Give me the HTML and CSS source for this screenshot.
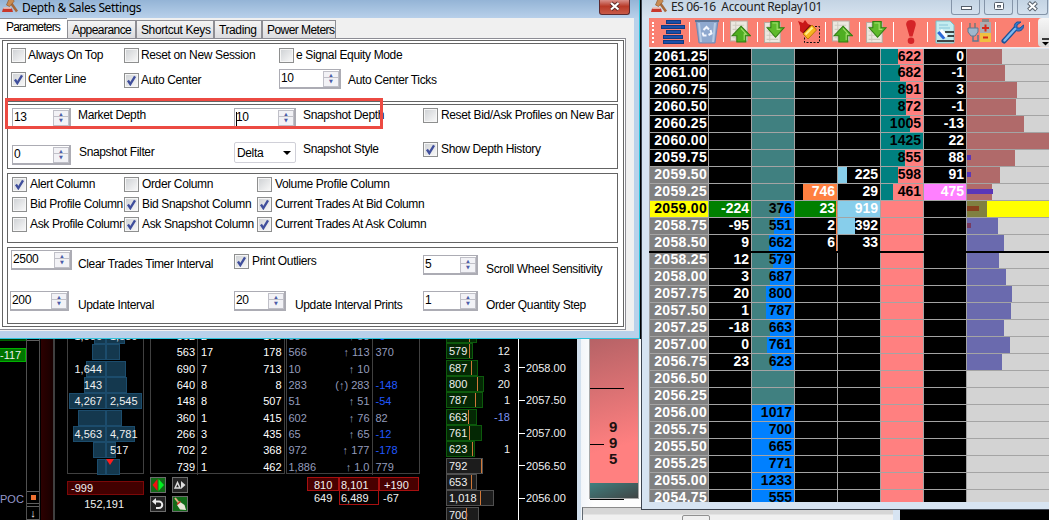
FILE: index.html
```html
<!DOCTYPE html>
<html lang="en">
<head>
  <meta charset="UTF-8" />
  <meta name="viewport" content="width=device-width, initial-scale=1.0"/>
  <title>Depth &amp; Sales</title>
  <link rel="stylesheet" href="styles.css">
</head>
<body>
  <svg class="defs" width="0" height="0">
    <defs>
      <symbol id="gavel" viewBox="0 0 16 16">
        <path d="M9 4L15 12.500" stroke="#a5683a" stroke-width="2.600"/>
        <path d="M4.500 6L7 0H11.500L12 2.500L7.500 7.500Z" fill="#c98b52" stroke="#84502a" stroke-width=".6"/>
        <path d="M1 9.500h9l1 3.500H0z" fill="#c8382c"/>
        <path d="M1.500 9h7.500" stroke="#f4b8a8" stroke-width="1.500"/>
      </symbol>
      <symbol id="pageUp" viewBox="1.5 1.5 20 22">
        <path d="M2 2h16v19H2z" fill="#ebe8e0" stroke="#b9aaa0"/>
        <path d="M4 6h11M4 10h11M4 14h11M4 18h11M7 3v17" stroke="#cfcac0"/>
        <path d="M12 7L21 16H16.500V22H8V16H3.500Z" fill="#4fae22" stroke="#2f7d10"/>
        <path d="M12 9L17 14.500H15V20" fill="none" stroke="#a4e070"/>
      </symbol>
      <symbol id="pageDown" viewBox="1.5 1 20 22">
        <path d="M2 3h15v19H2z" fill="#ebe8e0" stroke="#b9aaa0"/>
        <path d="M4 7h11M4 11h11M4 15h11M4 19h11M7 4v17" stroke="#cfcac0"/>
        <path d="M8 2H16V8H20.500L12.500 17L4.500 8H8Z" fill="#5fba2c" stroke="#2f7d10"/>
        <path d="M9.500 3.500H14V9.500H17" fill="none" stroke="#a4e070"/>
      </symbol>
    </defs>
  </svg>

  <div class="desktop">
    <!-- footprint chart -->
    <section class="chart">
      <div class="quotes">
        <div class="quote dim"></div>
        <div class="quote">-117</div>
        <div class="poc">POC</div>
      </div>
      <div class="scroller">
        <div class="thumb top"></div>
        <div class="thumb mid"><i></i></div>
        <div class="thumb end">↓</div>
      </div>
      <div class="band"></div>

      <div class="profile">
        <div class="profile-rows" id="profile"></div>
        <div class="delta">-999</div>
        <div class="volume">152,191</div>
      </div>

      <div class="prints">
        <div class="tables">
          <div class="table trades" id="trades"></div>
          <div class="table flow" id="flow"></div>
        </div>
        <div class="bottom">
          <div class="tools">
            <div class="tool green"><svg viewBox="0 0 14 14"><path d="M6.500 1V13L1.500 7Z" fill="#f01010"/><path d="M7.500 1V13L13 7Z" fill="#00f020"/></svg></div>
            <div class="tool"><svg viewBox="0 0 14 14"><path d="M2 10L4.500 4.500L7 10Z" fill="none" stroke="#ddd" stroke-width="1.500"/><path d="M8 3L12.500 7L8 11Z" fill="#ddd"/></svg></div>
            <div class="tool"><svg viewBox="0 0 14 14"><path d="M3 4.500H8A3 3 0 0 1 8 11H5" fill="none" stroke="#eee" stroke-width="2"/><path d="M1 4.500L5 1V8Z" fill="#eee"/></svg></div>
            <div class="tool green"><svg viewBox="0 0 14 14"><path d="M2 1L6 6" stroke="#e0b080" stroke-width="2"/><path d="M6.500 4.500L11.500 8L13 13L7 12.500L4 8Z" fill="#e8e8d8"/><path d="M4 7.500L7.500 4.500" stroke="#d03020" stroke-width="1.500"/></svg></div>
          </div>
          <div class="totals">
            <span>810</span><span>8,101</span><span>+190</span>
            <span>649</span><span>6,489</span><span>-67</span>
          </div>
        </div>
      </div>

      <div class="levels" id="levels"></div>
      <div class="axis" id="axis"></div>
    </section>

    <!-- pressure gauge -->
    <section class="gauge">
      <div class="gauge-body">
        <div class="gauge-top">
          <i class="mark long"></i>
          <i class="mark"></i>
          <div class="gauge-value">9<br>9<br>5</div>
        </div>
        <div class="gauge-low"></div>
        <i class="gauge-foot"></i>
      </div>
    </section>
    <div class="under">
      <div class="under-tab"></div>
    </div>

    <!-- ladder -->
    <section class="ladder">
      <div class="ladder-title">
        <svg class="app-icon" width="16" height="16"><use href="#gavel"/></svg>
        <span>ES 06-16&nbsp; Account Replay101</span>
        <div class="caption">
          <b><svg width="28" height="14"><rect x="9.500" y="6.500" width="10" height="3" fill="#fff" stroke="#555e6a"/></svg></b>
          <b><svg width="28" height="14"><rect x="9.500" y="2.500" width="9" height="7" rx="1" fill="#fff" stroke="#555e6a"/><rect x="12.500" y="5.500" width="3" height="1.500" fill="#fff" stroke="#555e6a"/></svg></b>
          <b><svg width="30" height="14"><path d="M10.500 2.500L18.500 10M18.500 2.500L10.500 10" stroke="#555e6a" stroke-width="4"/><path d="M11 3L18 9.500M18 3L11 9.500" stroke="#fff" stroke-width="2"/></svg></b>
        </div>
      </div>
      <div class="toolbar">
        <div class="grip"></div>
        <div class="item"><svg width="26" height="26" viewBox="0 0 26 26"><g fill="#1c4fa8" stroke="#123a80"><rect x="6.500" y="1.500" width="14" height="3"/><rect x="1.500" y="6.500" width="23" height="3"/><rect x="6.500" y="11.500" width="14" height="3"/><rect x="3.500" y="16.500" width="19" height="3"/><rect x="3.500" y="21.500" width="20" height="3"/></g></svg></div>
        <div class="item"><svg width="24" height="26" viewBox="0 0 24 26"><path d="M1 2h22l-3 22H4z" fill="#8fa9cf" stroke="#7088b4"/><path d="M0 2h24" stroke="#5f7596" stroke-width="2"/><path d="M4 4l2 19M20 4l-2 19" stroke="#b7cbe4" stroke-width="2"/><path d="M8.500 11l3-3 2.500 2.500M15.500 11l1 3.500-3 1.500M11.500 16.500H8.500l-1-3" fill="none" stroke="#f4f8ff" stroke-width="2"/></svg></div>
        <div class="item"><svg width="21" height="24"><use href="#pageUp"/></svg></div>
        <div class="item"><svg width="21" height="24"><use href="#pageDown"/></svg></div>
        <div class="item"><svg width="26" height="26" viewBox="0 0 26 26"><rect x="8.500" y="7.500" width="15" height="16" fill="none" stroke="#111" stroke-dasharray="2 1.500"/><path d="M2 2l5 2 2-3 3 4 5 2-8 9-5-4 0-5z" fill="#c81818"/><path d="M7 15L16 6L20.500 11L12 20Z" fill="#f6b420" stroke="#c07808"/><path d="M9.500 15.500L16.500 8.500" stroke="#fff08a" stroke-width="2"/><path d="M7.500 13.500L14.500 6" stroke="#5c1010"/></svg></div>
        <div class="item"><svg width="21" height="24"><use href="#pageUp"/></svg></div>
        <div class="item"><svg width="21" height="24"><use href="#pageDown"/></svg></div>
        <div class="item"><svg width="12" height="26" viewBox="0 0 12 26"><path d="M6 1C10 1 11.500 4 10.500 7L7.500 17.500H4.500L1.500 7C.5 4 2 1 6 1Z" fill="#d42428"/><circle cx="6" cy="21.800" r="3.300" fill="#d42428"/></svg></div>
        <div class="item"><svg width="22" height="26" viewBox="0 0 22 26"><path d="M2 2h14l4 4v18H2z" fill="#c4ecf0" stroke="#7cc0c8"/><path d="M5 6h9M5 9h11" stroke="#86c4d8"/><path d="M11 13h9M11 17h9M3 22h17" stroke="#111" stroke-width="1.600"/><path d="M3 14L8 10L14 17L9 20.500Z" fill="#fff"/><path d="M3 14L5.500 12L11.500 19L9 20.500Z" fill="#2a6ad8"/></svg></div>
        <div class="item"><svg width="26" height="26" viewBox="0 0 26 26"><path d="M4 4v5M9 4v5" stroke="#777" stroke-width="1.500"/><path d="M2 9h10v4l-3 4H5l-3-4z" fill="#9fb6cc" stroke="#60788e"/><path d="M7 17v5h5v-6" fill="none" stroke="#60788e" stroke-width="1.500"/><rect x="14" y="3" width="11" height="11" fill="#a9adb0"/><rect x="14" y="14" width="11" height="9" fill="#f0c040"/><path d="M16 1.500h7" stroke="#888" stroke-width="3"/><path d="M16 9h7M19.500 5.500v7M17 18.500h5" stroke="#d82818" stroke-width="2"/></svg></div>
        <div class="item"><svg width="24" height="26" viewBox="0 0 24 26"><path d="M3 22L14 10" stroke="#1c5298" stroke-width="5" stroke-linecap="round"/><path d="M20 3L16 6V9H19L22.500 6C23 10 20 12.500 16.500 12C12.500 11 12 5 16 3Z" fill="#2f78cc" stroke="#1c5298"/><path d="M3.500 21.500L14 10" stroke="#7cb8f0" stroke-width="2.500" stroke-linecap="round"/></svg></div>
        <div class="overflow"><svg width="7" height="8"><path d="M0 1h7" stroke="#000" stroke-width="1.500"/><path d="M0 4h7L3.500 7.500Z"/></svg></div>
      </div>
      <div class="ladder-rows" id="ladder"></div>
    </section>

    <!-- settings dialog -->
    <section class="dialog">
      <div class="dialog-title">
        <svg class="app-icon" width="16" height="16"><use href="#gavel"/></svg>
        <span>Depth &amp; Sales Settings</span>
        <b class="close"><svg width="30" height="13"><path d="M11 3L18.500 9.500M18.500 3L11 9.500" stroke="#5c2a28" stroke-width="4"/><path d="M11 3L18.500 9.500M18.500 3L11 9.500" stroke="#fff" stroke-width="2.200"/></svg></b>
      </div>
      <div class="dialog-body">
        <nav class="tabs">
          <div class="tab active">Parameters</div>
          <div class="tab">Appearance</div>
          <div class="tab">Shortcut Keys</div>
          <div class="tab">Trading</div>
          <div class="tab">Power Meters</div>
        </nav>
        <div class="page">
          <div class="frame">
            <div class="group general">
              <label class="check">Always On Top</label>
              <label class="check">Reset on New Session</label>
              <label class="check wide">e Signal Equity Mode</label>
              <label class="check on">Center Line</label>
              <label class="check on low">Auto Center</label>
              <div class="spin w62">10</div>
              <span class="low">Auto Center Ticks</span>
            </div>

            <div class="group depth">
              <div class="spin">13</div>
              <span class="text">Market Depth</span>
              <div class="spin w62 caret">10</div>
              <span class="text">Snapshot Depth</span>
              <label class="check">Reset Bid/Ask Profiles on New Bar</label>
              <div class="spin second">0</div>
              <span class="text filter">Snapshot Filter</span>
              <div class="select">Delta</div>
              <span class="text">Snapshot Style</span>
              <label class="check on">Show Depth History</label>
            </div>

            <div class="group columns">
              <label class="check on">Alert Column</label>
              <label class="check">Order Column</label>
              <label class="check">Volume Profile Column</label>
              <label class="check">Bid Profile Column</label>
              <label class="check on">Bid Snapshot Column</label>
              <label class="check on">Current Trades At Bid Column</label>
              <label class="check">Ask Profile Column</label>
              <label class="check on">Ask Snapshot Column</label>
              <label class="check on">Current Trades At Ask Column</label>
            </div>

            <div class="group timing">
              <div class="spin w61">2500</div>
              <span class="text">Clear Trades Timer Interval</span>
              <label class="check on">Print Outliers</label>
              <div class="spin w55 sens">5</div>
              <span class="text sens-text">Scroll Wheel Sensitivity</span>
              <div class="spin">200</div>
              <span class="text">Update Interval</span>
              <div class="pair">
                <div class="spin w52">20</div>
                <span class="text">Update Interval Prints</span>
              </div>
              <div class="spin w55">1</div>
              <span class="text">Order Quantity Step</span>
            </div>
          </div>
        </div>
      </div>
      <div class="highlight"></div>
    </section>
  </div>

  <script src="script.js"></script>
</body>
</html>
```

FILE: styles.css
```css
:root {
  --grid: #a4a4a4;
  --teal: #408080;
  --blue: #0080ff;
  --pink: #ff8080;
  --salmon: #fa8072;
  --frame: #b9d1ea;
  --font: "Liberation Sans", Arial, sans-serif;
}

* {
  box-sizing: border-box;
}

body {
  margin: 0;
  background: #000;
  font-family: var(--font);
  overflow: hidden;
}

.defs {
  position: absolute;
}

.desktop {
  position: relative;
  width: 1049px;
  height: 520px;
  overflow: hidden;
  background: #000;
}

/* ---------- settings dialog ---------- */

.dialog {
  position: absolute;
  left: 0;
  top: 0;
  width: 641px;
  height: 339px;
  padding: 0 6px 6px 0;
  background: var(--frame);
  border-right: 1px solid #000;
  box-shadow: inset -1px -1px 0 #2cc4dc;
  font-size: 12px;
  letter-spacing: -0.36px;
  color: #000;
}

.dialog-title {
  display: flex;
  align-items: center;
  height: 18px;
  margin-right: -5px;
  padding: 0 0 3px 2px;
  background: linear-gradient(to bottom, #94b4d6, #b8d0ea);
}

.dialog-title span {
  flex: 1;
  margin-left: 4px;
  font: 12px "Noto Sans", sans-serif;
  letter-spacing: -0.38px;
  line-height: 14px;
}

.close {
  width: 31px;
  height: 15px;
  margin-right: 9px;
  border: 1px solid #5c2a30;
  border-top: 0;
  border-radius: 0 0 3px 3px;
  background: linear-gradient(to bottom, #d8908a, #b83a28 45%, #c85a48);
}

.close svg {
  display: block;
}

.dialog-body {
  height: 313px;
  background: #f0f0f0;
}

.tabs {
  display: flex;
  align-items: flex-end;
  height: 20px;
}

.tab {
  height: 18px;
  padding: 2px 0 0 4px;
  line-height: 15px;
  border: 1px solid #8e8e94;
  border-bottom: 0;
  background: linear-gradient(to bottom, #f4f4f4, #dcdcdf);
  letter-spacing: -0.4px;
  white-space: nowrap;
}

.tab:nth-child(2) { width: 69px; letter-spacing: -0.8px; }
.tab:nth-child(2) { letter-spacing: -0.55px; }
.tab:nth-child(3) { width: 78px; }
.tab:nth-child(4) { width: 48px; }
.tab:nth-child(5) { width: 74px; letter-spacing: -0.55px; }

.tab.active {
  width: 67px;
  height: 20px;
  padding: 1px 0 0 6px;
  border-left: 0;
  border-right: 0;
  background: #fff;
  letter-spacing: -0.8px;
}

.page {
  width: 626px;
  height: 292px;
  padding: 1px 0 0 2px;
  border: 1px solid #8c8c94;
  border-left: 0;
  background: #fff;
}

.frame {
  display: flex;
  flex-direction: column;
  width: 622px;
  height: 287px;
  padding: 2px 4px;
  border: 1px solid #646464;
}

.group {
  display: grid;
  align-items: start;
  justify-content: start;
  width: 611px;
  border: 1px solid #646464;
  white-space: nowrap;
}

.general {
  grid-template-columns: 113px 155px 69px auto;
  grid-template-rows: 24px 24px;
  height: 59px;
  padding: 4px 0 0 3px;
}

.general .wide { grid-column: span 2; }
.general .low { padding-top: 1px; }
.general .spin { margin-top: -3px; }

.depth {
  grid-template-columns: 66px 156px 69px 120px auto;
  grid-template-rows: 34px 24px;
  height: 65px;
  margin-top: 2px;
  padding: 3px 0 0 4px;
}

.depth .second { margin-top: 3px; }
.depth .filter { padding: 3px 0 0 1px; }

.columns {
  grid-template-columns: 112px 133px auto;
  grid-auto-rows: 20px;
  height: 70px;
  margin-top: 4px;
  padding: 3px 0 0 4px;
}

.timing {
  grid-template-columns: 68px 156px 189px 63px auto;
  grid-template-rows: 41px 24px;
  height: 77px;
  margin-top: 4px;
  padding: 2px 0 0 2px;
}

.timing .w61 { margin-left: 1px; }
.timing .check { margin-top: 4px; }
.timing .text { margin-top: 7px; }
.timing .sens { margin-top: 5px; }
.timing .sens-text { margin-top: 12px; }

.pair {
  display: flex;
  gap: 9px;
}

.text,
.general span {
  line-height: 14px;
}

.check {
  display: flex;
  gap: 3px;
  line-height: 14px;
}

.check::before {
  content: "";
  flex: none;
  width: 13px;
  height: 13px;
  border: 1px solid #8e8f8f;
  background: linear-gradient(135deg, #cdd0d3, #fafafa);
  box-shadow: inset 0 0 0 1px #f6f6f6;
}

.general .check {
  gap: 2px;
}

.depth .check,
.timing .check {
  gap: 3px;
}

.check.on::before {
  background: url("data:image/svg+xml,%3Csvg xmlns='http://www.w3.org/2000/svg' viewBox='0 0 11 11'%3E%3Cpath d='M2.500 5.500L4.500 8.500L8.500 2' fill='none' stroke='%23404f9c' stroke-width='2'/%3E%3C/svg%3E"), linear-gradient(135deg, #cdd0d3, #fafafa);
}

.spin {
  position: relative;
  width: 59px;
  height: 20px;
  padding: 0 0 0 1px;
  border: 2px solid #acacb4;
  border-width: 1px 2px 2px 1px;
  line-height: 17px;
}

.w62 { width: 62px; }
.w61 { width: 61px; }
.w55 { width: 55px; }
.w52 { width: 52px; }

/* arrow buttons */
.spin::before,
.spin::after {
  position: absolute;
  right: 0;
  width: 14px;
  height: 8px;
  border: 1px solid #c0c0c8;
  background: #f2f2f6;
  font: 5px/6px "DejaVu Sans", sans-serif;
  letter-spacing: 0;
  text-align: center;
  color: #4c5ca8;
}

.spin::before {
  content: "▲";
  top: 1px;
}

.spin::after {
  content: "▼";
  bottom: 0;
}

.caret {
  padding-left: 1px;
  background: linear-gradient(#000, #000) 1px 3px / 1px 14px no-repeat;
}

.select {
  display: flex;
  align-items: center;
  justify-content: space-between;
  width: 62px;
  height: 21px;
  padding: 0 4px 0 2px;
  border: 1px solid #d0d0d8;
  border-radius: 2px;
}

.select::after {
  content: "";
  border: 4px solid transparent;
  border-top-color: #000;
  border-bottom: 0;
}

.highlight {
  position: absolute;
  left: 5px;
  top: 98px;
  width: 378px;
  height: 31px;
  border: 3px solid #ec4a42;
}

/* ---------- ladder ---------- */

.ladder {
  position: absolute;
  left: 641px;
  top: 0;
  width: 408px;
  height: 510px;
  padding: 0 0 7px 7px;
  border-left: 1px solid #3c4450;
  border-bottom: 1px solid #3c4450;
  background: #d7e4f2;
}

.ladder-title {
  display: flex;
  height: 18px;
  margin-left: -7px;
  padding-left: 8px;
  background: linear-gradient(to bottom, #c4d4e4, #d8e4f0);
}

.ladder-title .app-icon {
  margin: -1px 4px 0 1px;
}

.dialog-title .app-icon {
  margin-top: -1px;
}

.ladder-title span {
  flex: 1;
  font: 12px/14px "Noto Sans", sans-serif;
  letter-spacing: -0.36px;
  color: #222;
}

.caption {
  display: flex;
  gap: 4px;
}

.caption b {
  width: 29px;
  height: 15px;
  border: 1px solid #8494a8;
  border-top: 0;
  border-radius: 0 0 3px 3px;
}

.caption b:last-child {
  width: 31px;
  margin-right: 1px;
}

.toolbar {
  display: flex;
  height: 30px;
  background: var(--salmon);
  border-bottom: 1px solid #f8e8e4;
}

.grip {
  width: 2px;
  height: 21px;
  margin: 4px 2px 0 3px;
  border-left: 2px dotted #fff;
}

.item {
  display: flex;
  align-items: center;
  justify-content: center;
  width: 34px;
  padding-bottom: 1px;
}

.item::after {
  content: "";
  width: 1px;
  height: 20px;
  background: #fff;
}

.item svg {
  margin: 0 auto;
}

.overflow {
  flex: 1;
  margin-left: 8px;
  padding: 20px 0 0 4px;
  border-radius: 4px 0 0 4px;
  background: linear-gradient(to bottom, #f6f6f6, #d8d8d8);
}

.overflow svg {
  display: block;
}

.ladder-rows {
  display: flex;
  flex-direction: column;
  height: 454px;
  padding-top: 1px;
  overflow: hidden;
  font: bold 14px/15px var(--font);
}

.row {
  display: grid;
  flex: none;
  grid-template-columns: 60px repeat(6, 43px) 83px;
  height: 17px;
  border-bottom: 1px solid var(--grid);
}

.row:first-child {
  height: 16px;
  line-height: 14px;
}

/* centre line */
.row.center {
  height: 18px;
  margin-bottom: -1px;
  border-bottom: 2px solid #000;
  z-index: 1;
}

.cell {
  position: relative;
  padding-right: 2px;
  border-right: 1px solid var(--grid);
  background: #000;
  color: #fff;
  text-align: right;
  overflow: hidden;
}

.cell span {
  position: relative;
}

.cell .fill {
  position: absolute;
  top: 0;
  bottom: 0;
  left: 0;
}

.fill.right { left: auto; right: 0; }

.price { letter-spacing: 0.3px; padding-right: 1px; border-left: 1px solid var(--grid); }
.price.in { background: #808080; }
.price.last { background: #ff0; color: #000; }

.bid { background: var(--teal); color: #000; }
.bid .fill { background: var(--blue); }
.ask { background: var(--pink); color: #000; }
.ask .fill { background: #008080; }
.hit .fill { background: #ff8040; }
.lift .fill { background: #87ceeb; }
.cell.green { background: #008000; }
.cell.magenta { background: #ff80ff; }

.hist { background: #d3d3d3; border-right: 0; padding: 0; }
.hist .fill { background: #b06a6a; }
.hist.below .fill { background: #6a6aae; }
.hist.last { background: #ff0; }
.hist.last .fill { background: #808040; }

.hist .tick {
  position: absolute;
  left: 0;
  top: 5px;
  height: 5px;
  background: #5a36b8;
}

.hist.last .tick { background: #88401e; }
.hist.below .tick { background: #783a60; }

/* ---------- gauge ---------- */

.gauge {
  position: absolute;
  left: 577px;
  top: 330px;
  width: 66px;
  height: 190px;
  padding: 0 3px 0 12px;
  border-left: 4px solid #d2e0ee;
  background: linear-gradient(to right, #f2f5f9, #fdfdfd 12px);
}

.gauge-body {
  width: 50px;
  height: 169px;
  margin-left: -4px;
  border: solid #a8a8a8;
  border-width: 0 1px 1px;
}

.gauge-top {
  display: grid;
  grid-template-rows: 59px 56px 38px;
  height: 153px;
  background: linear-gradient(165deg, #b06064, #ff8080 75%);
}

.mark {
  width: 14px;
  border-bottom: 1px solid #000;
}

.mark.long {
  width: 34px;
}

.gauge-value {
  margin: -26px 0 0 19px;
  font-weight: bold;
  font-size: 15px;
  line-height: 16px;
  color: #201010;
}

.gauge-low {
  height: 15px;
  background: linear-gradient(160deg, #408080, #404444);
}

.gauge-foot {
  display: block;
  width: 34px;
  margin-top: 1px;
  border-bottom: 1px solid #000;
}

.under {
  position: absolute;
  left: 582px;
  top: 507px;
  width: 318px;
  height: 13px;
  border-left: 1px solid #606870;
  border-top: 1px solid #8a8a8a;
  border-right: 7px solid #d7e4f2;
  background: linear-gradient(to bottom, #d6d6d6 6px, #f0f0f0 7px);
  padding: 7px 0 0 99px;
}

.under-tab {
  width: 28px;
  height: 8px;
  border: 1px solid #909090;
  border-radius: 2px;
}

/* ---------- footprint chart ---------- */

.chart {
  position: absolute;
  left: 0;
  top: 327px;
  display: flex;
  width: 577px;
  height: 193px;
  background: #000;
  color: #f0f0f0;
  font-size: 11px;
  line-height: 16.330px;
}

.quotes {
  width: 26px;
}

.quote {
  width: 26px;
  height: 14px;
  margin-top: 7px;
  padding-right: 4px;
  border: 1px solid #00b000;
  border-left: 0;
  background: #007400;
  line-height: 13px;
  text-align: right;
}

.quote.dim {
  margin-top: 0;
  border-color: #006000;
  background: #004000;
}

.poc {
  height: 16px;
  margin-top: 129px;
  color: #9498cc;
}

.scroller {
  display: flex;
  flex-direction: column;
  width: 14px;
  border: solid #505050;
  border-width: 0 1px;
}

.thumb {
  display: flex;
  align-items: center;
  justify-content: center;
  height: 14px;
  border: 1px solid #606060;
  border-width: 1px 0;
}

.thumb.mid { margin-top: 150px; }
.thumb.end { margin-top: 2px; }

.thumb i {
  width: 5px;
  height: 5px;
  background: #f07030;
}

.band {
  width: 14px;
  margin-left: 1px;
  border-right: 2px solid #404040;
  background: linear-gradient(to right, #2c0000, #180000);
}

.profile {
  width: 77px;
  margin-left: 12px;
}

.profile-rows {
  height: 147px;
  border: 1px solid #404040;
}

.profile-rows .bar-row {
  display: grid;
  grid-template-columns: 38px 38px;
  height: 16.330px;
}

.bar-row span {
  position: relative;
  padding: 0 4px;
}

.bar-row span:first-child {
  text-align: right;
}

.bar-row i {
  position: absolute;
  top: 0;
  left: 0;
  height: 16px;
  border: 1px solid #1c4c6c;
  background: #14384e;
}

.bar-row span:first-child i {
  left: auto;
  right: 0;
}

.bar-row em {
  position: relative;
  font-style: normal;
}

.bar-row.down span:last-child::after {
  content: "";
  position: absolute;
  z-index: 1;
  left: 0;
  bottom: -6px;
  border: 4px solid transparent;
  border-top: 6px solid #ff1c1c;
  border-bottom: 0;
}

.delta {
  height: 14px;
  margin-top: 7px;
  padding-left: 3px;
  border: 1px solid #7c0808;
  background: #420000;
  line-height: 13px;
}

.volume {
  margin-top: 1px;
  padding-right: 20px;
  text-align: right;
}

.prints {
  width: 270px;
  margin-left: 6px;
}

.tables {
  display: flex;
  gap: 1px;
  height: 147px;
}

.table {
  width: 135px;
  border: 1px solid #404040;
}

.table div {
  display: grid;
  height: 16.330px;
}

.trades { color: #fff; }
.trades div { grid-template-columns: 47px 1fr auto; padding-right: 2px; }
.trades span:first-child { text-align: right; padding-right: 2px; border-right: 1px solid #404040; }
.trades span:nth-child(2) { padding-left: 3px; }

.flow { color: #949cbc; }
.flow div { grid-template-columns: 32px 54px 1fr; }
.flow span:first-child { padding-left: 2px; white-space: nowrap; }
.flow span:nth-child(2) { text-align: right; padding-right: 2px; border-right: 1px solid #404040; }
.flow span:nth-child(3) { padding-left: 3px; }
.flow .neg { color: #2058ff; }

.bottom {
  display: flex;
  justify-content: space-between;
  padding: 3px 1px 0 0;
}

.tools {
  display: grid;
  grid-template-columns: 16px 16px;
  grid-auto-rows: 16px;
  gap: 3px 6px;
}

.tool {
  border: 1px solid #6c6c6c;
  background: #242424;
}

.tool.green { background: #126a18; }

.tool svg {
  display: block;
  width: 14px;
  height: 14px;
}

.totals {
  display: grid;
  grid-template-columns: 32px 40px 40px;
  grid-template-rows: 14px 14px;
  line-height: 15px;
  text-align: left;
}

.totals span {
  padding-left: 7px;
}

.totals span:nth-child(3n+2) {
  padding-left: 1px;
  border: 1px solid #a81010;
  border-top: 0;
}

.totals span:nth-child(3n) { padding-left: 4px; }

.totals span:nth-child(-n+3) {
  border: 1px solid #a81010;
  background: #480000;
  line-height: 14px;
}

.totals span:first-child { padding-left: 6px; }

.levels {
  width: 72px;
  margin-left: 26px;
}

.level {
  display: flex;
  justify-content: space-between;
  height: 16.330px;
  padding-right: 8px;
}

.level b {
  position: relative;
  height: 16px;
  padding-left: 2px;
  border: 1px solid #0c5a0c;
  background: #042804;
  font-weight: normal;
  line-height: 15px;
  white-space: nowrap;
}

.level.out b {
  border-color: #505050;
  background: #1c1c1c;
}

.level i {
  position: absolute;
  top: 0;
  bottom: 0;
  width: 1px;
  background: #d07838;
}

.level .neg { color: #7c94f0; }

.axis {
  border-left: 1px solid #fff;
}

.axis div {
  display: flex;
  align-items: center;
  gap: 1px;
  height: 32.660px;
}

.axis div:first-child {
  height: 24.500px;
  padding-bottom: 8px;
}

.axis div::before {
  content: "";
  width: 6px;
  height: 1px;
  background: #fff;
}
```

FILE: script.js
```javascript
// bid: [text, left offset of blue], ask: [text, teal width], hist: bar width
const rows = [
  { ask: [622, 17], d: 0, hist: 35 },
  { ask: [682, 19], d: -1, hist: 38 },
  { ask: [891, 25], d: 3, hist: 50 },
  { ask: [872, 25], d: -1, hist: 49 },
  { ask: [1005, 29], d: -13, hist: 57 },
  { ask: [1425, 42], d: 22, hist: 83 },
  { ask: [855, 24], d: 88, hist: 48, tick: 4 },
  { ask: [598, 17], d: 91, hist: 33, tick: 4, lift: [225, 9] },
  { ask: [461, 12], d: 475, dc: "magenta", hist: 25, tick: 26, hit: [746, 34], lift: [29, 0] },
  { pull: -224, pc: "green", bid: [376, 28], hit: [23, 1], hc: "green", lift: [919, 42], hist: 20, tick: 12 },
  { pull: -95, bid: [551, 22], hit: [2, 1], lift: [392, 17], hist: 31, tick: 4 },
  { pull: 9, bid: [662, 17], hit: [6, 1], lift: [33, 0], hist: 37 },
  { pull: 12, bid: [579, 21], hist: 32 },
  { pull: 3, bid: [687, 18], hist: 39 },
  { pull: 20, bid: [800, 14], hist: 45 },
  { pull: 1, bid: [787, 14], hist: 44 },
  { pull: -18, bid: [663, 18], hist: 37 },
  { pull: 0, bid: [761, 15], hist: 43 },
  { pull: 23, bid: [623, 20], hist: 35 },
  {}, {},
  { bid: [1017, 0] }, { bid: [700, 0] }, { bid: [665, 0] },
  { bid: [771, 0] }, { bid: [1233, 0] }, { bid: [555, 0] }
];

function cell(cls, text, width, side) {
  const fill = width ? `<i class="fill ${side || ""}" style="width:${width}px"></i>` : "";
  return `<div class="cell ${cls}">${fill}<span>${text ?? ""}</span></div>`;
}

document.getElementById("ladder").innerHTML = rows.map((r, i) => {
  const price = (2061.25 - i * 0.25).toFixed(2);
  const bid = r.bid || [];
  const ask = r.ask || [];
  const hit = r.hit || [];
  const lift = r.lift || [];
  const zone = i === 9 ? "last" : i > 6 ? "in" : "";
  const side = i === 9 ? "last" : i > 9 ? "below" : "";
  const tick = r.tick ? `<i class="tick" style="width:${r.tick}px"></i>` : "";
  return `<div class="row ${i === 11 ? "center" : ""}">` +
    cell("price " + zone, price) +
    cell(r.pc || "", r.pull) +
    cell("bid", bid[0], r.bid ? 42 - bid[1] : 0, "right") +
    cell("hit " + (r.hc || ""), hit[0], hit[1], "right") +
    cell("lift", lift[0], lift[1]) +
    cell("ask", ask[0], ask[1]) +
    cell(r.dc || "", r.d) +
    `<div class="cell hist ${side}"><i class="fill" style="width:${r.hist || 0}px"></i>${tick}</div>` +
    `</div>`;
}).join("");

// [left text, left width, right text, right width]
const profile = [
  ["1,506", 12, "1,589", 19], ["", 14, "", 14], ["1,644", 20, "", 20], ["143", 22, "", 21],
  ["4,267", 37, "2,545", 36], ["", 28, "", 16], ["4,563", 33, "4,781", 29],
  ["", 13, "517", 10], ["", 9, "", 14]
];

document.getElementById("profile").innerHTML = profile.map((p, i) =>
  `<div class="bar-row ${i === 7 ? "down" : ""}">
    <span><i style="width:${p[1]}px"></i><em>${p[0]}</em></span>
    <span><i style="width:${p[3]}px"></i><em>${p[2]}</em></span>
  </div>`).join("");

const trades = [
  [562, 2, 160], [563, 17, 178], [690, 7, 713], [640, 8, 8], [148, 8, 507],
  [360, 1, 415], [266, 3, 435], [702, 2, 368], [739, 1, 462]
];

document.getElementById("trades").innerHTML = trades.map(t =>
  `<div><span>${t[0]}</span><span>${t[1]}</span><span>${t[2]}</span></div>`).join("");

const flow = [
  ["88", "↑ 88", "-6"], ["566", "↑ 113", "370"], ["10", "↑ 10", ""], ["283", "(↑) 283", "-148"],
  ["51", "↑ 51", "-54"], ["602", "↑ 76", "82"], ["65", "↑ 65", "-12"],
  ["972", "↑ 177", "-178"], ["1,886", "↑ 1.0", "779"]
];

document.getElementById("flow").innerHTML = flow.map(f =>
  `<div><span>${f[0]}</span><span>${f[1]}</span><span class="${f[2][0] === "-" ? "neg" : ""}">${f[2]}</span></div>`).join("");

// [volume, box width, marker, delta]
const levels = [
  ["662", 31, 22, "9"], ["579", 27, 22, "12"], ["687", 32, 24, "3"], ["800", 38, 30, "20"],
  ["787", 37, 28, "1"], ["663", 31, 21, "-18"], ["761", 36, 22, ""], ["623", 29, 25, "1"],
  ["792", 37, 34, ""], ["653", 31, 24, ""], ["1,018", 48, 33, ""], ["700", 33, 19, ""]
];

document.getElementById("levels").innerHTML = levels.map((l, i) =>
  `<div class="level ${i > 7 ? "out" : ""}">
    <b style="width:${l[1]}px">${l[0]}<i style="left:${l[2]}px"></i></b>
    <span class="${l[3][0] === "-" ? "neg" : ""}">${l[3]}</span>
  </div>`).join("");

document.getElementById("axis").innerHTML =
  ["2058.50", "2058.00", "2057.50", "2057.00", "2056.50", "2056.00"].map(p => `<div>${p}</div>`).join("");
```
